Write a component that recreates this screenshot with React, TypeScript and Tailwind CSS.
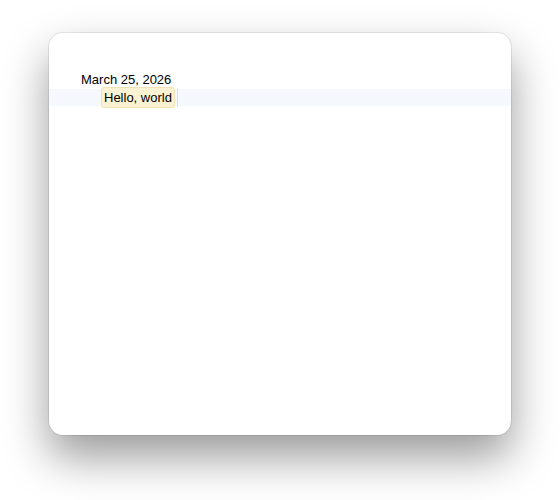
export default function App() {
  return (
    <div className="w-[560px] h-[500px] bg-white pt-[33px] pl-[49px] font-['Liberation_Sans',Arial,sans-serif]">
      {/* Window */}
      <div className="w-[462px] h-[402px] bg-white rounded-[14px] shadow-[0_0_0_1px_rgba(0,0,0,0.08),0_22px_45px_rgba(0,0,0,0.4)] pt-[39px]">
        <div className="pl-[32px] text-[13px] leading-[16px] text-black">March 25, 2026</div>
        {/* Selected row */}
        <div className="mt-[1px] h-[17px] bg-[#f5f9fe] flex items-center">
          <div className="ml-[52px] h-[21px] px-[2px] flex items-center rounded-[3px] bg-[#faf2d2] border border-[#efe2b4] text-[13px] leading-[16px] text-black">
            Hello, world
          </div>
          <div className="ml-[2px] w-[1px] h-[19px] bg-[#cfe0f5]" />
        </div>
      </div>
    </div>
  )
}
